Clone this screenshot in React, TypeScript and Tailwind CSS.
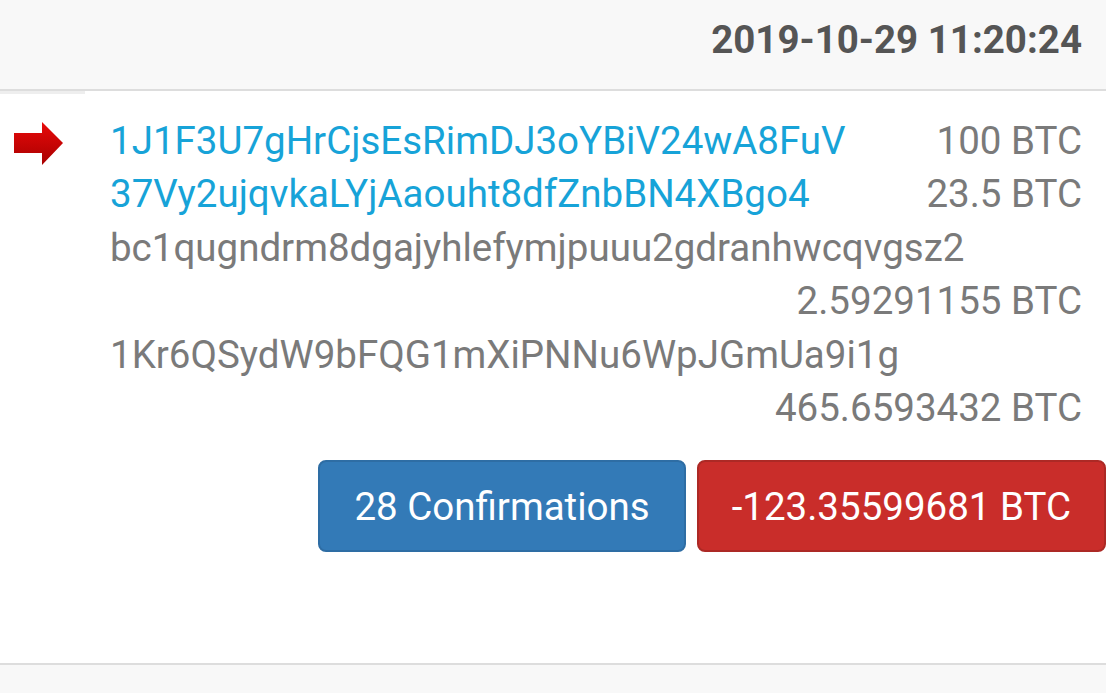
const Arrow = () => (
    <svg width="50" height="44" viewBox="0 0 50 44" className="block">
        <defs>
            <linearGradient id="arrowFill" x1="0" y1="0" x2="0" y2="1">
                <stop offset="0" stopColor="#e80a0a" />
                <stop offset="1" stopColor="#a80000" />
            </linearGradient>
        </defs>
        <polygon points="0,11 28,11 28,0 49,21 28,43 28,31 0,31" fill="url(#arrowFill)" />
    </svg>
)

const rows = [
    { address: '1J1F3U7gHrCjsEsRimDJ3oYBiV24wA8FuV', amount: '100 BTC', link: true },
    { address: '37Vy2ujqvkaLYjAaouht8dfZnbBN4XBgo4', amount: '23.5 BTC', link: true },
    { address: 'bc1qugndrm8dgajyhlefymjpuuu2gdranhwcqvgsz2', amount: '2.59291155 BTC', link: false },
    { address: '1Kr6QSydW9bFQG1mXiPNNu6WpJGmUa9i1g', amount: '465.6593432 BTC', link: false },
]

const App = () => {
    return (
        <div className="w-[1106px] min-h-[693px] bg-white font-['Roboto',sans-serif] flex flex-col">
            <div className="h-[91px] bg-[#f8f8f8] border-b-2 border-[#dddddd] flex items-start justify-end pr-[24px] pt-[21px]">
                <h2 className="text-[38.5px] font-bold text-[#555555] leading-none">2019-10-29 11:20:24</h2>
            </div>
            <div className="h-[3px] w-[85px] bg-[#eeeeee]" />

            <div className="flex pt-[20px]">
                <div className="w-[110px] pl-[14px] pt-[8px] shrink-0">
                    <Arrow />
                </div>
                <div className="flex-1 pr-[24px] text-[38.5px] leading-[53.4px] text-[#7a7a7a]">
                    {rows.map((row) => (
                        <div key={row.address} className="flex flex-wrap">
                            <span className={row.link ? 'text-[#17a3d8]' : ''}>{row.address}</span>
                            <span className="ml-auto pl-4">{row.amount}</span>
                        </div>
                    ))}
                </div>
            </div>

            <div className="flex justify-end gap-[11px] mt-[26px]">
                <button className="h-[92px] px-[34px] rounded-[8px] bg-[#337ab7] border-2 border-[#2e6da4] text-white text-[38.5px]">28 Confirmations</button>
                <button className="h-[92px] px-[33px] rounded-[8px] bg-[#c92d2a] border-2 border-[#ac2925] text-white text-[38.5px]">-123.35599681 BTC</button>
            </div>

            <div className="flex-1 min-h-[110px]" />
            <div className="h-[30px] bg-[#f8f8f8] border-t-2 border-[#dddddd]" />
        </div>
    )
}

export default App
